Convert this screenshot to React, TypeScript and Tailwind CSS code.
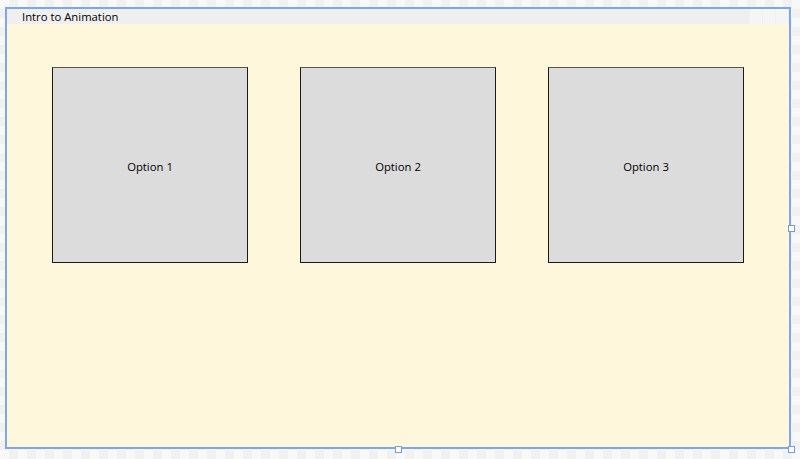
import React from 'react';

const options = ['Option 1', 'Option 2', 'Option 3'];

function Handle({ className }: { className: string }) {
  // selection grip on the window frame
  return <div className={`absolute w-[7px] h-[7px] border border-[#6f9be8] bg-white ${className}`} />;
}

export default function App() {
  return (
    <div
      className="w-[800px] h-[459px] overflow-hidden bg-[conic-gradient(#f1f1f1_25%,#f8f8f8_0_50%,#f1f1f1_0_75%,#f8f8f8_0)] bg-[length:18px_18px] pl-[5px] pt-[7px]"
      style={{ fontFamily: '"Segoe UI", "Open Sans", "Noto Sans", sans-serif' }}
    >
      <div className="relative w-[786px] h-[442px] border-2 border-[#7ea6ea] flex flex-col">
        {/* Title bar */}
        <div className="h-[15px] flex items-center bg-[#efefef] text-[11.3px] leading-none text-black">
          <span className="pl-[15px] pt-[1px]">Intro to Animation</span>
          <div className="ml-auto flex gap-[1px] pr-[1px] h-full">
            <div className="w-[12px] h-full bg-[#f5f5f5]" />
            <div className="w-[12px] h-full bg-[#f5f5f5]" />
            <div className="w-[12px] h-full bg-[#f5f5f5]" />
          </div>
        </div>

        {/* Content */}
        <div className="flex-1 bg-[#fef7dc] flex justify-center gap-[52px] pt-[43px]">
          {options.map((label) => (
            <div
              key={label}
              className="w-[196px] h-[196px] bg-[#dcdcdc] border border-[#1a1a1a] border-t-[#555] flex items-center justify-center pt-[4px] text-[11.3px] text-black"
            >
              {label}
            </div>
          ))}
        </div>

        <Handle className="right-[-6px] top-[216px]" />
        <Handle className="bottom-[-6px] left-[388px]" />
        <Handle className="right-[-6px] bottom-[-6px]" />
      </div>
    </div>
  );
}
